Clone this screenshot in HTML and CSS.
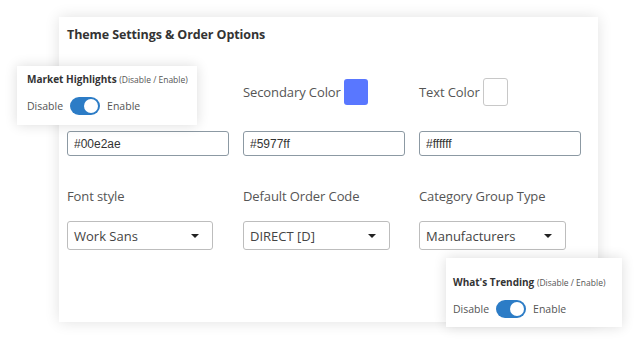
FILE: index.html
```html
<!DOCTYPE html>
<html lang="en">
<head>
    <meta charset="UTF-8">
    <title>Theme Settings & Order Options</title>
    <link rel="stylesheet" href="styles.css">
</head>
<body>
    <div class="stage">
        <div class="card">
            <h2 class="card-title">Theme Settings &amp; Order Options</h2>

            <div class="fields">
                <div class="field">
                    <div class="color-label">Primary Color <span class="swatch" style="background: #00e2ae;"></span></div>
                    <input class="hex-input" type="text" value="#00e2ae">
                </div>
                <div class="field">
                    <div class="color-label">Secondary Color <span class="swatch" style="background: #5977ff;"></span></div>
                    <input class="hex-input" type="text" value="#5977ff">
                </div>
                <div class="field">
                    <div class="color-label">Text Color <span class="swatch swatch-white"></span></div>
                    <input class="hex-input" type="text" value="#ffffff">
                </div>

                <div class="field field-lower">
                    <div class="field-label">Font style</div>
                    <div class="select-box">Work Sans <span class="caret"></span></div>
                </div>
                <div class="field field-lower">
                    <div class="field-label">Default Order Code</div>
                    <div class="select-box">DIRECT [D] <span class="caret"></span></div>
                </div>
                <div class="field field-lower">
                    <div class="field-label">Category Group Type</div>
                    <div class="select-box">Manufacturers <span class="caret"></span></div>
                </div>
            </div>
        </div>

        <!-- 떠 있는 토글 카드 -->
        <div class="float-card float-market">
            <div class="float-title">Market Highlights <span>(Disable / Enable)</span></div>
            <div class="toggle-row">Disable <span class="toggle"></span> Enable</div>
        </div>

        <div class="float-card float-trending">
            <div class="float-title">What's Trending <span>(Disable / Enable)</span></div>
            <div class="toggle-row">Disable <span class="toggle"></span> Enable</div>
        </div>
    </div>
</body>
</html>
```

FILE: styles.css
```css
body {
    margin: 0;
    padding: 0;
    background: #ffffff;
    font-family: 'Open Sans', 'Noto Sans', sans-serif;
    color: #555;
}

.stage {
    position: relative;
    width: 639px;
    height: 344px;
    overflow: hidden;
}

.card {
    margin: 17px 0 0 59px;
    width: 539px;
    height: 305px;
    box-sizing: border-box;
    padding: 9px 0 0 8px;
    background: #fff;
    box-shadow: 0 0 14px rgba(0, 0, 0, 0.12);
}

.card-title {
    margin: 0;
    font-size: 12.5px;
    line-height: 18px;
    font-weight: 700;
    color: #333;
    letter-spacing: -0.1px;
}

.fields {
    display: grid;
    grid-template-columns: 162px 162px 162px;
    column-gap: 14px;
    margin-top: 34px;
}

.color-label {
    display: flex;
    align-items: center;
    gap: 3px;
    height: 28px;
    font-size: 13px;
    color: #555;
    letter-spacing: -0.1px;
}

.swatch {
    display: inline-block;
    width: 24px;
    height: 26px;
    border-radius: 3px;
}

.swatch-white {
    background: #fff;
    border: 1px solid #c8c8c8;
    box-sizing: border-box;
    width: 25px;
    height: 28px;
}

.hex-input {
    display: block;
    margin-top: 25px;
    width: 162px;
    height: 25px;
    box-sizing: border-box;
    padding: 0 6px;
    border: 1px solid #8c99a3;
    border-radius: 3px;
    font-family: 'Liberation Sans', Arial, sans-serif;
    font-size: 12px;
    color: #333;
    background: #fff;
}

.field-lower {
    margin-top: 30px;
}

.field-label {
    height: 20px;
    line-height: 20px;
    font-size: 13px;
    color: #555;
    letter-spacing: -0.1px;
}

.select-box {
    display: flex;
    align-items: center;
    justify-content: space-between;
    margin-top: 15px;
    width: 146px;
    height: 29px;
    box-sizing: border-box;
    padding: 0 13px 0 6px;
    border: 1px solid #bdbdbd;
    border-radius: 3px;
    font-size: 13px;
    color: #444;
}

.field:nth-child(5) .select-box,
.field:nth-child(6) .select-box {
    width: 147px;
}

.caret {
    width: 0;
    height: 0;
    border-left: 4px solid transparent;
    border-right: 4px solid transparent;
    border-top: 4px solid #222;
}

/* 떠 있는 카드 */
.float-card {
    position: absolute;
    background: #fff;
    box-shadow: 0 0 12px rgba(0, 0, 0, 0.14);
    box-sizing: border-box;
    padding-left: 10px;
}

.float-market {
    left: 17px;
    top: 66px;
    width: 180px;
    height: 59px;
    padding-top: 5px;
}

.float-trending {
    left: 446px;
    top: 258px;
    width: 176px;
    height: 69px;
    padding-top: 16px;
    padding-left: 7px;
}

.float-title {
    font-size: 10px;
    line-height: 16px;
    font-weight: 700;
    color: #333;
    white-space: nowrap;
}

.float-title span {
    font-size: 8.5px;
    font-weight: 400;
    color: #555;
}

.toggle-row {
    display: flex;
    align-items: center;
    gap: 7px;
    margin-top: 9px;
    font-size: 10.5px;
    color: #555;
}

.toggle {
    position: relative;
    display: inline-block;
    width: 30px;
    height: 18px;
    border-radius: 9px;
    background: #2c7cc6;
}

.toggle::after {
    content: "";
    position: absolute;
    top: 2px;
    right: 2px;
    width: 14px;
    height: 14px;
    border-radius: 50%;
    background: #fff;
}
```
